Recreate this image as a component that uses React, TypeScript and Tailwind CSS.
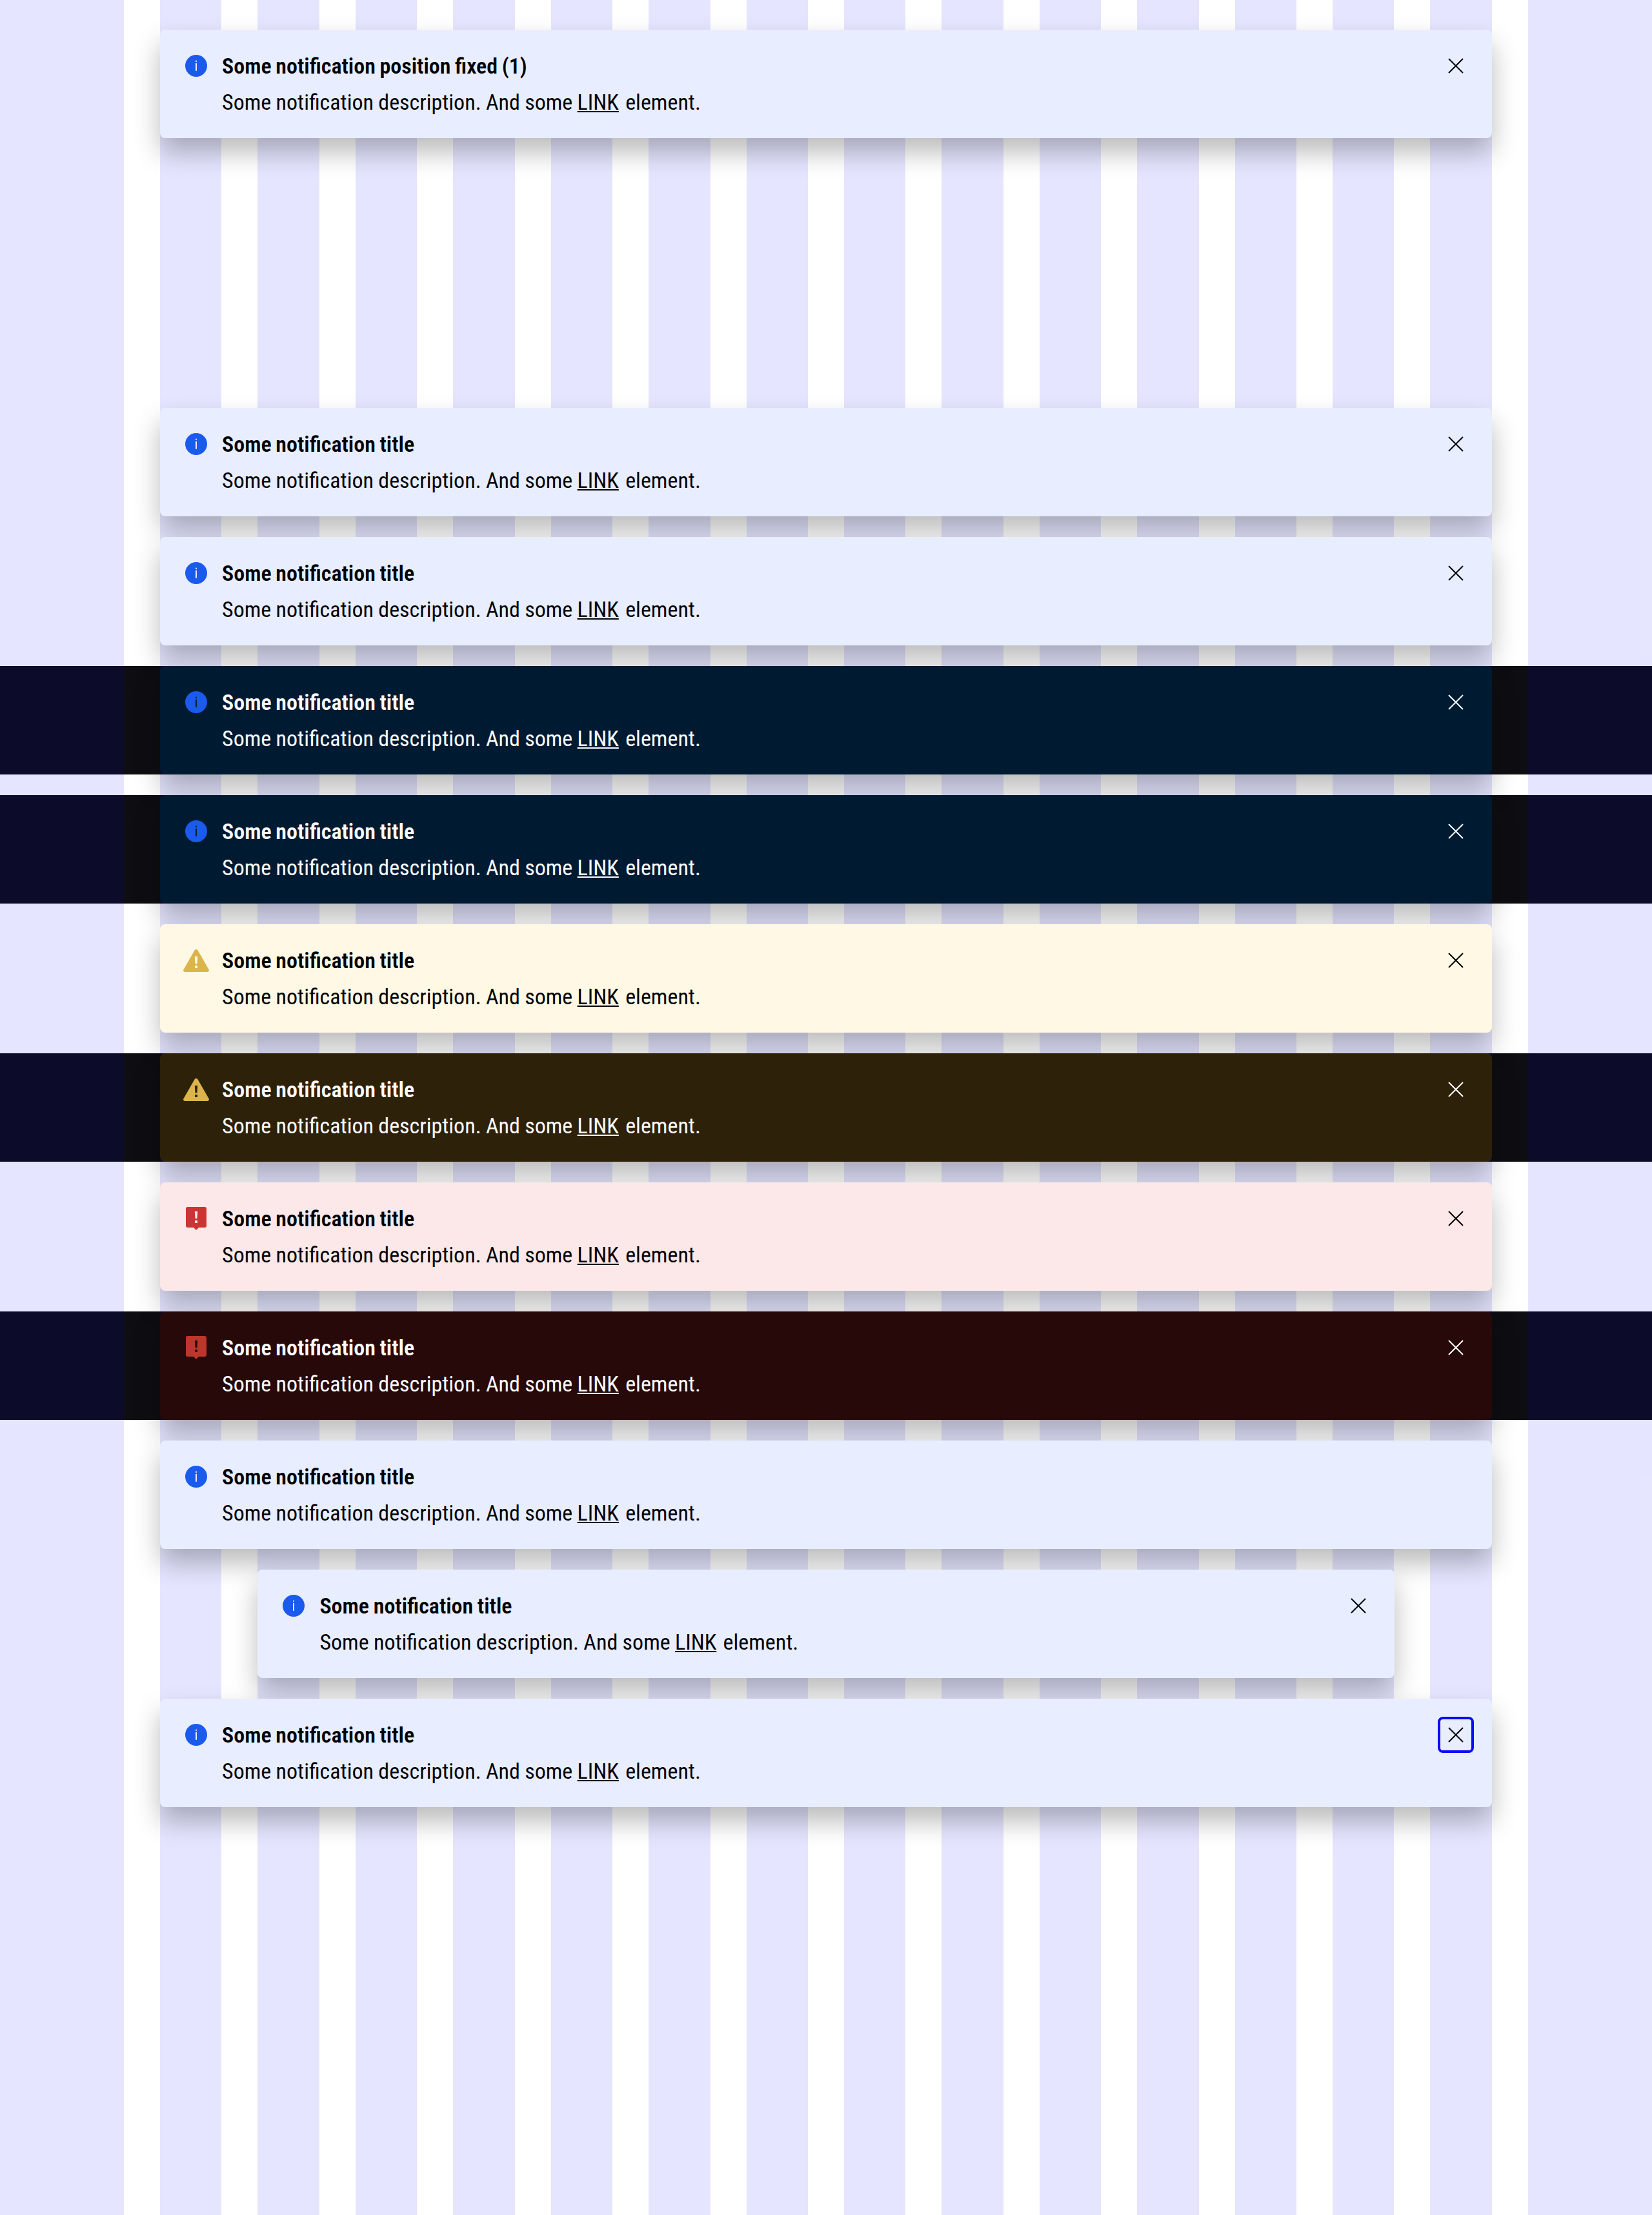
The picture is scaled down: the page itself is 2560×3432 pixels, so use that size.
type State = 'info' | 'warning' | 'error';

const surface = {
  light: { info: 'bg-[#e8edff]', warning: 'bg-[#fff8e4]', error: 'bg-[#fce8e8]' },
  dark: { info: 'bg-[#001a32]', warning: 'bg-[#2d2109]', error: 'bg-[#270909]' },
};

const tint = {
  light: { info: 'text-[#1a5aed]', warning: 'text-[#dbb549]', error: 'text-[#cc3333]' },
  dark: { info: 'text-[#1a5aed]', warning: 'text-[#dbb549]', error: 'text-[#bd362b]' },
};

const mark = {
  light: { info: 'fill-[#e8edff]', warning: 'fill-[#fff8e4]', error: 'fill-[#fce8e8]' },
  dark: { info: 'fill-[#001a32]', warning: 'fill-[#2d2109]', error: 'fill-[#270909]' },
};

function StateIcon({ state, dark }: { state: State; dark: boolean }) {
  const mode = dark ? 'dark' : 'light';
  return (
    <svg viewBox="0 0 24 24" className={`size-12 shrink-0 fill-current ${tint[mode][state]}`}>
      {state === 'info' && (
        <>
          <circle cx="12" cy="12" r="8.5" />
          <path className={mark[mode].info} d="M11.5 7.85h1v1h-1zM11.5 9.85h1v6h-1z" />
        </>
      )}
      {state === 'warning' && (
        <>
          <path d="M10.75 4.2a1.45 1.45 0 0 1 2.5 0l8.6 15.1a1.15 1.15 0 0 1-1 1.7H3.15a1.15 1.15 0 0 1-1-1.7z" />
          <path className={mark[mode].warning} d="M10.9 9h2.2l-.35 5.65h-1.5zM11 16h2v2h-2z" />
        </>
      )}
      {state === 'error' && (
        <>
          <path d="M5.5 3h13A1.5 1.5 0 0 1 20 4.5v13a1.5 1.5 0 0 1-1.5 1.5H14l-2 2-2-2H5.5A1.5 1.5 0 0 1 4 17.5v-13A1.5 1.5 0 0 1 5.5 3z" />
          <path className={mark[mode].error} d="M10.9 6.5h2.2L12.75 12h-1.5zM11 13.5h2v2h-2z" />
        </>
      )}
    </svg>
  );
}

interface NotificationProps {
  title?: string;
  state?: State;
  dark?: boolean;
  closable?: boolean;
  narrow?: boolean;
  focused?: boolean;
}

function Notification({
  title = 'Some notification title',
  state = 'info',
  dark = false,
  closable = true,
  narrow = false,
  focused = false,
}: NotificationProps) {
  return (
    <div className={`${dark ? 'bg-[#0e0e12] text-[#fbfcff]' : 'text-[#010205]'} ${narrow ? 'px-[399.43px]' : 'px-[248px]'}`}>
      <section
        className={`relative z-10 flex items-start gap-4 rounded-lg p-8 shadow-[0_22px_40px_rgba(0,0,0,0.27)] ${surface[dark ? 'dark' : 'light'][state]}`}
      >
        <StateIcon state={state} dark={dark} />
        <div className="flex grow flex-col gap-2">
          <h2 className="font-semibold [word-spacing:-1.2px]">{title}</h2>
          <p className="[word-spacing:-0.5px]">
            Some notification description. And some{' '}
            <a href="#" className="mr-[3px] underline decoration-2 underline-offset-2">LINK</a> element.
          </p>
        </div>
        {closable && (
          <button
            aria-label="Close"
            className={`size-12 shrink-0 rounded-[4px] ${focused ? 'outline-4 outline-[#0a0aff]' : ''}`}
          >
            <svg viewBox="0 0 24 24" className="size-12 fill-none stroke-current">
              <path d="m6.5 6.5 11 11M17.5 6.5l-11 11" />
            </svg>
          </button>
        )}
      </section>
    </div>
  );
}

export default function App() {
  return (
    <div className='relative h-[3432px] w-[2560px] overflow-hidden bg-white pt-[46px] font-["Roboto",sans-serif] text-[34px] leading-[48px] [font-stretch:75%]'>
      {/* Column grid overlay */}
      <div aria-hidden className="pointer-events-none absolute inset-0 flex gap-14">
        <div className="w-48 shrink-0 bg-[#0000ff]/10" />
        {Array.from({ length: 14 }, (_, i) => (
          <div key={i} className="flex-1 bg-[#0000ff]/10" />
        ))}
        <div className="w-48 shrink-0 bg-[#0000ff]/10" />
      </div>

      <Notification title="Some notification position fixed (1)" />
      <main className="mt-[418px] flex flex-col gap-8">
        <Notification />
        <Notification />
        <Notification dark />
        <Notification dark />
        <Notification state="warning" />
        <Notification state="warning" dark />
        <Notification state="error" />
        <Notification state="error" dark />
        <Notification closable={false} />
        <Notification narrow />
        <Notification focused />
      </main>
    </div>
  );
}
